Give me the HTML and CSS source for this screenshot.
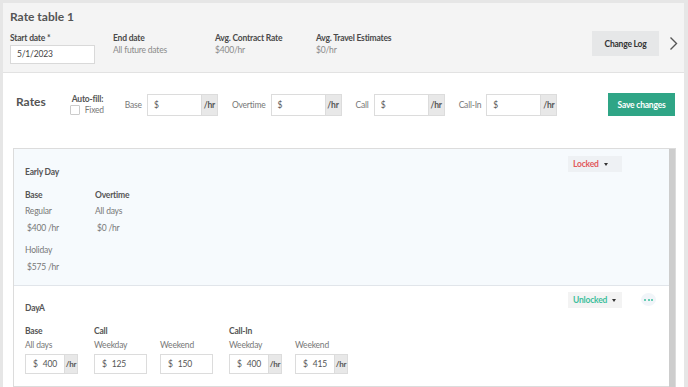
FILE: index.html
```html
<!DOCTYPE html>
<html>
<head>
<meta charset="utf-8">
<link rel="stylesheet" href="styles.css">
</head>
<body>
<div class="app">
  <header class="header">
    <h1 class="title">Rate table 1</h1>
    <div class="meta">
      <div class="field f1">
        <div class="field-label">Start date *</div>
        <div class="date-input">5/1/2023</div>
      </div>
      <div class="field f2">
        <div class="field-label">End date</div>
        <div class="field-value">All future dates</div>
      </div>
      <div class="field f3">
        <div class="field-label">Avg. Contract Rate</div>
        <div class="field-value">$400/hr</div>
      </div>
      <div class="field f4">
        <div class="field-label">Avg. Travel Estimates</div>
        <div class="field-value">$0/hr</div>
      </div>
      <button class="btn-log">Change Log</button>
      <svg class="chevron" width="9" height="15" viewBox="0 0 9 15"><polyline points="1.5,1.5 7.5,7.5 1.5,13.5" fill="none" stroke="#555" stroke-width="1.4"/></svg>
    </div>
  </header>

  <section class="rates-bar">
    <h2 class="rates-title">Rates</h2>
    <div class="autofill">
      <div class="autofill-label">Auto-fill:</div>
      <div class="fixed"><span class="checkbox"></span>Fixed</div>
    </div>
    <div class="rate-field">
      <span class="rate-label">Base</span>
      <div class="igroup lg"><span class="ibox">$</span><span class="addon">/hr</span></div>
    </div>
    <div class="rate-field">
      <span class="rate-label">Overtime</span>
      <div class="igroup lg"><span class="ibox">$</span><span class="addon">/hr</span></div>
    </div>
    <div class="rate-field">
      <span class="rate-label">Call</span>
      <div class="igroup lg"><span class="ibox">$</span><span class="addon">/hr</span></div>
    </div>
    <div class="rate-field">
      <span class="rate-label">Call-In</span>
      <div class="igroup lg"><span class="ibox">$</span><span class="addon">/hr</span></div>
    </div>
    <button class="btn-save">Save changes</button>
  </section>

  <div class="list">
    <div class="cards">
      <div class="card card-locked">
        <div class="card-head">
          <div class="card-title">Early Day</div>
          <div class="card-controls">
            <button class="status locked">Locked <span class="caret"></span></button>
            <span class="dots hidden"><i></i><i></i><i></i></span>
          </div>
        </div>
        <div class="ro-cols">
          <div class="ro-col">
            <div class="ro-head">Base</div>
            <div class="ro-sub">Regular</div>
            <div class="ro-val">$400 /hr</div>
            <div class="ro-sub">Holiday</div>
            <div class="ro-val">$575 /hr</div>
          </div>
          <div class="ro-col">
            <div class="ro-head">Overtime</div>
            <div class="ro-sub">All days</div>
            <div class="ro-val">$0 /hr</div>
          </div>
        </div>
      </div>

      <div class="card">
        <div class="card-head">
          <div class="card-title">DayA</div>
          <div class="card-controls">
            <button class="status unlocked">Unlocked <span class="caret"></span></button>
            <span class="dots"><i></i><i></i><i></i></span>
          </div>
        </div>
        <div class="groups">
          <div class="group">
            <div class="ro-head">Base</div>
            <div class="group-cols">
              <div class="gcol">
                <div class="gsub">All days</div>
                <div class="igroup sm"><span class="ibox"><span class="cur">$</span>400</span><span class="addon">/hr</span></div>
              </div>
            </div>
          </div>
          <div class="group">
            <div class="ro-head">Call</div>
            <div class="group-cols">
              <div class="gcol">
                <div class="gsub">Weekday</div>
                <div class="igroup sm"><span class="ibox"><span class="cur">$</span>125</span></div>
              </div>
              <div class="gcol">
                <div class="gsub">Weekend</div>
                <div class="igroup sm"><span class="ibox"><span class="cur">$</span>150</span></div>
              </div>
            </div>
          </div>
          <div class="group">
            <div class="ro-head">Call-In</div>
            <div class="group-cols">
              <div class="gcol">
                <div class="gsub">Weekday</div>
                <div class="igroup sm"><span class="ibox"><span class="cur">$</span>400</span><span class="addon">/hr</span></div>
              </div>
              <div class="gcol">
                <div class="gsub">Weekend</div>
                <div class="igroup sm"><span class="ibox"><span class="cur">$</span>415</span><span class="addon">/hr</span></div>
              </div>
            </div>
          </div>
        </div>
      </div>
    </div>
    <div class="scrollbar"></div>
  </div>
</div>
</body>
</html>
```

FILE: styles.css
```css
* { box-sizing: border-box; margin: 0; padding: 0; }

html, body { height: 387px; overflow: hidden; }

body {
  background: #e6e6e6;
  font-family: Lato, "Noto Sans", sans-serif;
  font-size: 8.5px;
  letter-spacing: -0.2px;
  color: #555;
  padding: 3px 4px 0 3px;
}

button { letter-spacing: -0.2px; }

.app {
  background: #fff;
  height: 384px;
}

/* Header */
.header {
  background: #f4f4f4;
  border-bottom: 1px solid #e2e2e2;
  height: 70px;
  padding: 7px 6px 0 7px;
}

.title {
  font-size: 12px;
  font-weight: 700;
  line-height: 14px;
  letter-spacing: 0;
  color: #555;
}

.meta {
  display: flex;
  align-items: flex-start;
  margin-top: 8px;
}

.field { flex: none; }
.f1 { width: 103px; }
.f2 { width: 102px; }
.f3 { width: 101px; }
.f4 { width: 120px; }

.field-label {
  font-weight: 700;
  line-height: 12px;
  color: #4a4a4a;
}

.field-value {
  line-height: 12px;
  color: #8a8a8a;
}

.date-input {
  margin-top: 1px;
  width: 85px;
  height: 19px;
  background: #fff;
  border: 1px solid #d9d9d9;
  padding-left: 6px;
  line-height: 17px;
  color: #444;
}

.btn-log {
  margin-left: auto;
  margin-top: -1px;
  width: 67px;
  height: 25px;
  border: none;
  background: #e6e7e8;
  font-family: inherit;
  font-size: 8.5px;
  font-weight: 700;
  color: #333;
}

.chevron {
  margin-left: 10px;
  margin-top: 4px;
  flex: none;
}

/* Rates bar */
.rates-bar {
  display: flex;
  align-items: center;
  height: 75px;
  padding: 20px 9px 32px 13px;
}

.rates-title {
  font-size: 12px;
  font-weight: 700;
  color: #555;
  line-height: 14px;
  letter-spacing: 0;
  margin-top: -5px;
}

.autofill {
  margin-left: 24px;
  display: flex;
  flex-direction: column;
}

.autofill-label {
  font-weight: 700;
  line-height: 11px;
  padding-left: 2px;
  color: #555;
}

.fixed {
  display: flex;
  align-items: center;
  line-height: 11px;
  color: #777;
}

.checkbox {
  width: 10px;
  height: 10px;
  border: 1px solid #ccc;
  border-radius: 1px;
  background: #fff;
  margin-right: 5px;
}

.rate-field {
  display: flex;
  align-items: center;
  margin-left: 14px;
}
.autofill + .rate-field { margin-left: 21px; }

.rate-label {
  color: #777;
  margin-right: 5px;
}

.igroup {
  display: flex;
  border: 1px solid #dcdcdc;
  background: #fff;
}

.igroup.lg { height: 22px; width: 71px; }
.igroup.sm { height: 20px; width: 53px; }

.ibox {
  flex: 1;
  display: flex;
  align-items: center;
  padding-left: 6px;
  color: #555;
}

.addon {
  flex: none;
  display: flex;
  align-items: center;
  justify-content: center;
  background: #e8e8e8;
  border-left: 1px solid #dcdcdc;
  font-weight: 700;
  color: #555;
}
.lg .addon { width: 16px; }
.sm .addon { width: 13px; font-size: 8px; }

.cur { margin-right: 5px; }

.btn-save {
  margin-left: auto;
  width: 67px;
  height: 23px;
  border: none;
  background: #2fa586;
  color: #fff;
  font-family: inherit;
  font-size: 8.5px;
  font-weight: 700;
}

/* List */
.list {
  display: flex;
  margin: 0 8px 0 10px;
  border: 1px solid #dcdcdc;
  height: 240px;
  overflow: hidden;
}

.cards { flex: 1; }

.scrollbar {
  flex: none;
  width: 6px;
  background: #cdcdcd;
}

.card {
  padding: 0 13px 12px 11px;
  border-bottom: 1px solid #dcdcdc;
}

.card-locked {
  background: #f6fafd;
  height: 137px;
  border-bottom: 1px solid #e1e5ea;
}

.card-head {
  display: flex;
  justify-content: space-between;
  align-items: flex-start;
}

.card-title {
  margin-top: 17px;
  line-height: 12px;
  font-weight: 700;
  color: #555;
}

.card + .card .card-title { margin-top: 16px; }

.card-controls {
  display: flex;
  align-items: flex-start;
  margin-top: 7px;
}

.card + .card .card-controls { margin-top: 6px; }

.status {
  width: 54px;
  height: 16px;
  border: none;
  font-family: inherit;
  font-size: 8.5px;
  font-weight: 700;
  display: flex;
  align-items: center;
  padding-left: 5px;
}

.status.locked { background: #eef1f4; color: #e2595b; }
.status.unlocked { background: #f3f3f3; color: #3dbf9c; }

.caret {
  width: 0;
  height: 0;
  border-left: 2.5px solid transparent;
  border-right: 2.5px solid transparent;
  border-top: 3px solid #333;
  margin-left: 5px;
  margin-top: 1px;
}

.dots {
  margin-left: 19px;
  margin-top: 1px;
  width: 15px;
  height: 13px;
  border-radius: 50%;
  background: #f1f5f9;
  display: flex;
  align-items: center;
  justify-content: center;
  gap: 1.5px;
}
.dots i {
  width: 2px;
  height: 2px;
  border-radius: 50%;
  background: #3dbf9c;
}
.dots.hidden { visibility: hidden; }

/* Read-only rates */
.ro-cols {
  display: flex;
  margin-top: 11px;
}

.ro-col { width: 70px; }

.ro-head {
  line-height: 12px;
  font-weight: 700;
  color: #555;
}

.ro-sub {
  line-height: 12px;
  margin-top: 4px;
  color: #777;
}

.ro-val {
  line-height: 12px;
  margin-top: 4px;
  padding-left: 2px;
  color: #777;
  margin-bottom: 10px;
}

.ro-val + .ro-sub { margin-top: 10px; }
.ro-sub + .ro-val { margin-top: 5px; }
.ro-head + .ro-sub { margin-top: 4px; }

/* Editable groups */
.groups {
  display: flex;
  gap: 16px;
  margin-top: 11px;
}

.group-cols {
  display: flex;
  gap: 13px;
}

.gsub {
  margin-top: 2px;
  line-height: 12px;
  color: #777;
  margin-bottom: 3px;
}

.sm .ibox { padding-left: 7px; }
```
